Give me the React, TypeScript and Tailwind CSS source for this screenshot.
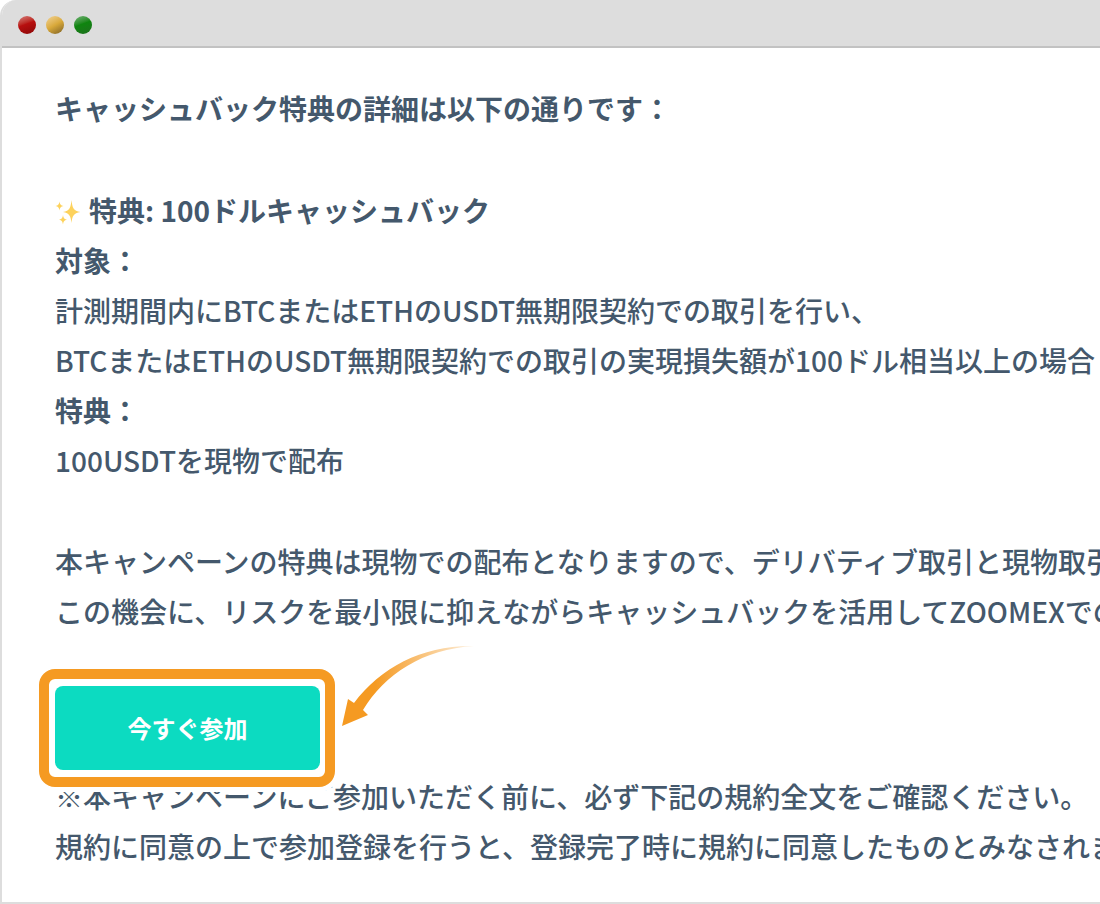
const dots = [
  { name: "close", color: "bg-linear-160 from-[#d47a7a] via-[#b80f0f] via-45% to-[#8a0808]" },
  { name: "minimize", color: "bg-linear-150 from-[#f3d493] via-[#d9a93a] via-50% to-[#7d6125]" },
  { name: "zoom", color: "bg-linear-160 from-[#6fb573] via-[#0e850e] via-45% to-[#1d701d]" },
];

function Sparkles() {
  return (
    <svg
      viewBox="0 0 28 28"
      aria-hidden="true"
      className="mr-1.5 inline-block size-7 align-[-3px]"
    >
      <g fill="#fdd25c">
        <path d="M16.5 3 C17.4 11 18.2 13.6 25.5 15 C18.2 16.4 17.4 19 16.5 26 C15.6 19 14.8 16.4 8 15 C14.8 13.6 15.6 11 16.5 3Z" />
        <path d="M4.5 4.5 C5 7.5 5.6 8.3 8.6 9 C5.6 9.7 5 10.5 4.5 13.5 C4 10.5 3.4 9.7 .5 9 C3.4 8.3 4 7.5 4.5 4.5Z" />
        <path d="M8 18 C8.5 21 9.1 22 12 22.7 C9.1 23.4 8.5 24.4 8 27.4 C7.5 24.4 6.9 23.4 4 22.7 C6.9 22 7.5 21 8 18Z" />
      </g>
    </svg>
  );
}

function Arrow() {
  return (
    <svg
      viewBox="0 0 132 84"
      aria-hidden="true"
      className="absolute -top-8 left-full ml-2.5 h-[84px] w-[132px] overflow-visible"
    >
      <defs>
        <linearGradient id="arrow-fade" x1="0" y1="0" x2="1" y2="0">
          <stop offset="0" stopColor="#f59a22" />
          <stop offset="0.25" stopColor="#f59a22" />
          <stop offset="1" stopColor="#f59a22" stopOpacity="0.15" />
        </linearGradient>
      </defs>
      <path
        d="M7 79 L13 52 L19 56 C46 20 88 -2 139 -1 C88 2 50 27 28 63 L33 68 Z"
        fill="url(#arrow-fade)"
      />
    </svg>
  );
}

export default function App() {
  return (
    <div className="min-h-screen bg-white">
      <div className="flex min-h-screen flex-col overflow-hidden rounded-tl-2xl border-b-2 border-l-2 border-[#dddddd] bg-white font-['Noto_Sans_CJK_JP',sans-serif] text-[28px]/[50px] font-medium whitespace-nowrap text-[#44586c]">
        {/* Title bar */}
        <header className="flex h-12 items-center gap-2.5 border-b-2 border-[#c2c2c2] bg-[#dddddd] pt-1 pl-4">
          {dots.map((dot) => (
            <span key={dot.name} className={`size-[18px] rounded-full ${dot.color}`} />
          ))}
        </header>

        <main className="flex-1 pt-[35px] pb-7 pl-[53px]">
          <h1 className="font-bold">キャッシュバック特典の詳細は以下の通りです：</h1>

          <section className="mt-[52px]">
            <h2 className="font-bold">
              <Sparkles />
              特典: 100ドルキャッシュバック
            </h2>
            <h3 className="font-bold">対象：</h3>
            <p>
              計測期間内にBTCまたはETHのUSDT無期限契約での取引を行い、
              <br />
              BTCまたはETHのUSDT無期限契約での取引の実現損失額が100ドル相当以上の場合
            </p>
            <h3 className="font-bold">特典：</h3>
            <p>100USDTを現物で配布</p>
          </section>

          <p className="mt-[51px]">
            本キャンペーンの特典は現物での配布となりますので、デリバティブ取引と現物取引
            <br />
            この機会に、リスクを最小限に抑えながらキャッシュバックを活用してZOOMEXでの
          </p>

          {/* Highlighted call to action, overlapping the note below */}
          <div className="relative z-10 mt-[33px] -ml-4 w-fit rounded-2xl border-10 border-[#f59a22] bg-white py-[7px] pr-[5px] pl-1.5 shadow-[0_0_0_5px_#ffffff]">
            <button
              type="button"
              className="block h-[84px] w-[265px] rounded-lg bg-[#0cdbc1] text-2xl font-bold text-white"
            >
              今すぐ参加
            </button>
            <Arrow />
          </div>

          <p className="-mt-4">
            ※本キャンペーンにご参加いただく前に、必ず下記の規約全文をご確認ください。
            <br />
            規約に同意の上で参加登録を行うと、登録完了時に規約に同意したものとみなされま
          </p>
        </main>
      </div>
    </div>
  );
}
